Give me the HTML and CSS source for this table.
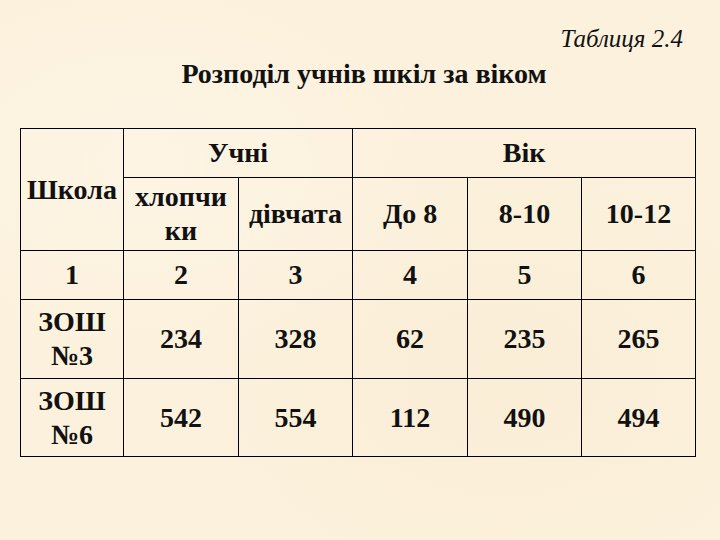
FILE: index.html
```html
<!DOCTYPE html>
<html>
<head>
<meta charset="utf-8">
<link rel="stylesheet" href="styles.css">
</head>
<body>
<div class="page">
  <p class="tab-no">Таблиця 2.4</p>
  <h1 class="title">Розподіл учнів шкіл за віком</h1>
  <table class="data">
    <colgroup>
      <col class="c1"><col class="c2"><col class="c3"><col class="c4"><col class="c5"><col class="c6">
    </colgroup>
    <tr class="r1">
      <td rowspan="2">Школа</td>
      <td colspan="2">Учні</td>
      <td colspan="3">Вік</td>
    </tr>
    <tr class="r2">
      <td>хлопчи<br>ки</td>
      <td>дівчата</td>
      <td>До 8</td>
      <td>8-10</td>
      <td>10-12</td>
    </tr>
    <tr class="r3">
      <td>1</td><td>2</td><td>3</td><td>4</td><td>5</td><td>6</td>
    </tr>
    <tr class="r4">
      <td>ЗОШ<br>№3</td><td>234</td><td>328</td><td>62</td><td>235</td><td>265</td>
    </tr>
    <tr class="r5">
      <td>ЗОШ<br>№6</td><td>542</td><td>554</td><td>112</td><td>490</td><td>494</td>
    </tr>
  </table>
</div>
</body>
</html>
```

FILE: styles.css
```css
html, body {
  margin: 0;
  padding: 0;
}
body {
  width: 720px;
  height: 540px;
  overflow: hidden;
  background-color: #fcf1dc;
  background-image:
    radial-gradient(ellipse at 20% 30%, rgba(255,255,255,0.22), transparent 40%),
    radial-gradient(ellipse at 70% 70%, rgba(240,225,195,0.22), transparent 45%);
  font-family: "Liberation Serif", Tinos, "Noto Serif", "DejaVu Serif", serif;
  color: #111;
}
.page {
  padding-top: 25px;
}
.tab-no {
  margin: 0;
  font-size: 25px;
  line-height: 28px;
  font-style: italic;
  font-weight: normal;
  text-align: right;
  padding-right: 37px;
}
.title {
  margin: 6px 0 0;
  font-size: 28px;
  line-height: 30px;
  font-weight: bold;
  text-align: center;
  padding-left: 8px;
}
.data {
  margin: 39px 0 0 20px;
  border-collapse: collapse;
  table-layout: fixed;
  width: 675px;
  font-size: 28px;
  font-weight: bold;
  line-height: 34px;
}
.data td {
  border: 1.5px solid #000;
  text-align: center;
  vertical-align: middle;
  padding: 0;
}
.c1 { width: 103px; }
.c2 { width: 115px; }
.c3 { width: 114px; }
.c4 { width: 115px; }
.c5 { width: 114px; }
.c6 { width: 114px; }
.r1 { height: 49px; }
.r2 { height: 73px; }
.r3 { height: 49px; }
.r4 { height: 79px; }
.r5 { height: 78px; }
```
